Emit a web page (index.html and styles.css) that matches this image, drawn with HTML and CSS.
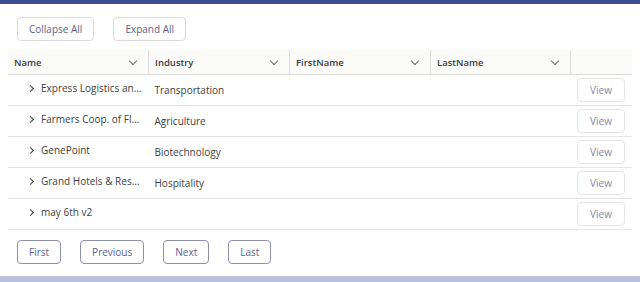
FILE: index.html
```html
<!DOCTYPE html>
<html lang="en">
<head>
    <meta charset="UTF-8">
    <meta name="viewport" content="width=device-width, initial-scale=1.0">
    <title>Accounts Tree Grid</title>
    <link rel="stylesheet" href="styles.css">
</head>
<body>
    <div class="top-band"></div>

    <div class="card">
        <div class="toolbar">
            <button class="btn">Collapse All</button>
            <button class="btn">Expand All</button>
        </div>

        <table class="grid">
            <thead>
                <tr>
                    <th class="col-name"><span>Name</span><i class="caret-down"></i></th>
                    <th class="col-industry"><span>Industry</span><i class="caret-down"></i></th>
                    <th class="col-first"><span>FirstName</span><i class="caret-down"></i></th>
                    <th class="col-last"><span>LastName</span><i class="caret-down"></i></th>
                    <th class="col-action"></th>
                </tr>
            </thead>
            <tbody>
                <tr>
                    <td><div class="name-cell"><i class="caret-right"></i><span class="name-text">Express Logistics and Transport</span></div></td>
                    <td>Transportation</td>
                    <td></td>
                    <td></td>
                    <td class="action"><button class="btn btn-view">View</button></td>
                </tr>
                <tr>
                    <td><div class="name-cell"><i class="caret-right"></i><span class="name-text">Farmers Coop. of Florida</span></div></td>
                    <td>Agriculture</td>
                    <td></td>
                    <td></td>
                    <td class="action"><button class="btn btn-view">View</button></td>
                </tr>
                <tr>
                    <td><div class="name-cell"><i class="caret-right"></i><span class="name-text">GenePoint</span></div></td>
                    <td>Biotechnology</td>
                    <td></td>
                    <td></td>
                    <td class="action"><button class="btn btn-view">View</button></td>
                </tr>
                <tr>
                    <td><div class="name-cell"><i class="caret-right"></i><span class="name-text">Grand Hotels &amp; Resorts Ltd</span></div></td>
                    <td>Hospitality</td>
                    <td></td>
                    <td></td>
                    <td class="action"><button class="btn btn-view">View</button></td>
                </tr>
                <tr>
                    <td><div class="name-cell"><i class="caret-right"></i><span class="name-text">may 6th v2</span></div></td>
                    <td></td>
                    <td></td>
                    <td></td>
                    <td class="action"><button class="btn btn-view">View</button></td>
                </tr>
            </tbody>
        </table>

        <div class="pager">
            <button class="btn btn-page">First</button>
            <button class="btn btn-page">Previous</button>
            <button class="btn btn-page">Next</button>
            <button class="btn btn-page">Last</button>
        </div>
    </div>

    <div class="bottom-band"></div>
</body>
</html>
```

FILE: styles.css
```css
body {
    margin: 0;
    font-family: "Open Sans", Arial, sans-serif;
    font-size: 10px;
    color: #3e3e3c;
    background-color: #fff;
}

.top-band {
    height: 4px;
    background-color: #3d4d8e;
}

.bottom-band {
    height: 6px;
    background-color: #b8c0dc;
}

.card {
    height: 272px;
    padding: 13px 8px 0 8px;
    box-sizing: border-box;
}

.btn {
    font-family: inherit;
    font-size: 10px;
    color: #5a5f8f;
    background-color: #fff;
    border: 1px solid #dddbda;
    border-radius: 4px;
    height: 24px;
    padding: 0 11px;
    cursor: pointer;
}

.toolbar {
    display: flex;
    gap: 19px;
    padding-left: 9px;
    margin-bottom: 9px;
}

.grid {
    width: 624px;
    border-collapse: collapse;
    table-layout: fixed;
}

.grid th {
    height: 24px;
    padding: 0 6px;
    text-align: left;
    font-weight: 600;
    font-size: 9.5px;
    color: #3e3e3c;
    background-color: #fafaf9;
    border-bottom: 1px solid #dddbda;
    border-right: 1px solid #dddbda;
}

.grid th:last-child {
    border-right: none;
}

.grid th span {
    float: left;
}

.col-name { width: 128px; }
.col-industry { width: 128px; }
.col-first { width: 128px; }
.col-last { width: 127px; }

.caret-down {
    float: right;
    width: 5px;
    height: 5px;
    margin: 2px 6px 0 0;
    border-right: 1px solid #706e6b;
    border-bottom: 1px solid #706e6b;
    transform: rotate(45deg);
}

.grid td {
    height: 30px;
    padding: 0 6px;
    border-bottom: 1px solid #e5e5e5;
    white-space: nowrap;
}

.name-cell {
    display: flex;
    align-items: center;
    gap: 8px;
    padding-left: 14px;
    position: relative;
    top: -2px;
}

.name-text {
    overflow: hidden;
    text-overflow: ellipsis;
    white-space: nowrap;
}

.caret-right {
    flex: none;
    width: 4px;
    height: 4px;
    border-right: 1px solid #3e3e3c;
    border-bottom: 1px solid #3e3e3c;
    transform: rotate(-45deg);
}

.grid td.action {
    text-align: right;
    padding-right: 7px;
}

.btn-view {
    width: 48px;
    padding: 0;
    color: #8486a9;
    border-color: #e5e5e5;
}

.pager {
    display: flex;
    gap: 19px;
    padding-left: 9px;
    margin-top: 10px;
}

.btn-page {
    border-color: #8c90ac;
}
```
